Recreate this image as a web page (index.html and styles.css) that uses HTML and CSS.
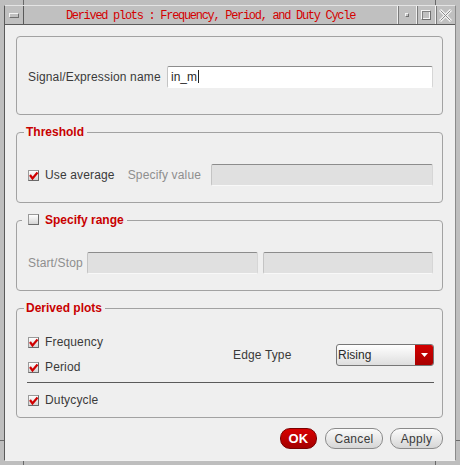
FILE: index.html
```html
<!DOCTYPE html>
<html>
<head>
<meta charset="utf-8">
<link rel="stylesheet" href="styles.css">
</head>
<body>
<span class="mark mark-tl"></span>
<span class="mark mark-tr"></span>
<span class="mark mark-bl"></span>
<span class="mark mark-br"></span>
<span class="mark mark-lb"></span>
<span class="mark mark-rb"></span>
<div class="window">
  <div class="titlebar">
    <div class="tb-menu"><span class="menu-icon"></span></div>
    <div class="tb-title">Derived plots : Frequency, Period, and Duty Cycle</div>
    <div class="tb-btn"><span class="iconify-icon"></span></div>
    <div class="tb-btn"><span class="max-icon"></span></div>
    <div class="tb-btn">
      <svg width="13" height="13" viewBox="0 0 13 13"><path d="M1 1 L12 12 M12 1 L1 12" stroke="#f4f4f4" stroke-width="3"/><path d="M1.5 1.5 L11.5 11.5 M11.5 1.5 L1.5 11.5" stroke="#8a8a8a" stroke-width="1"/></svg>
    </div>
  </div>
  <div class="content">
    <div class="group group-signal">
      <span class="label">Signal/Expression name</span>
      <div class="field field-signal">in_m<span class="caret"></span></div>
    </div>

    <div class="group group-threshold">
      <div class="legend legend-text">Threshold</div>
      <div class="row">
        <span class="check on"><svg width="11" height="11" viewBox="0 0 11 11"><path d="M2 5 L4.5 8.5 L9.5 2.5" fill="none" stroke="#d00000" stroke-width="2.2"/></svg></span>
        <span class="label">Use average</span>
        <span class="label dim spec">Specify value</span>
        <div class="field disabled field-spec"></div>
      </div>
    </div>

    <div class="group group-range">
      <div class="legend legend-check">
        <span class="check"></span>
        <span>Specify range</span>
      </div>
      <div class="row">
        <span class="label dim">Start/Stop</span>
        <div class="field disabled field-start"></div>
        <div class="field disabled field-stop"></div>
      </div>
    </div>

    <div class="group group-plots">
      <div class="legend legend-text">Derived plots</div>
      <div class="plots-top">
        <div class="checks">
          <div class="crow">
            <span class="check on"><svg width="11" height="11" viewBox="0 0 11 11"><path d="M2 5 L4.5 8.5 L9.5 2.5" fill="none" stroke="#d00000" stroke-width="2.2"/></svg></span>
            <span class="label">Frequency</span>
          </div>
          <div class="crow">
            <span class="check on"><svg width="11" height="11" viewBox="0 0 11 11"><path d="M2 5 L4.5 8.5 L9.5 2.5" fill="none" stroke="#d00000" stroke-width="2.2"/></svg></span>
            <span class="label">Period</span>
          </div>
        </div>
        <div class="edge">
          <span class="label">Edge Type</span>
          <div class="combo">
            <span class="combo-text">Rising</span>
            <span class="combo-arrow"><svg width="7" height="4" viewBox="0 0 7 4"><path d="M0 0 L7 0 L3.5 4 Z" fill="#ffffff"/></svg></span>
          </div>
        </div>
      </div>
      <div class="sep"></div>
      <div class="crow">
        <span class="check on"><svg width="11" height="11" viewBox="0 0 11 11"><path d="M2 5 L4.5 8.5 L9.5 2.5" fill="none" stroke="#d00000" stroke-width="2.2"/></svg></span>
        <span class="label">Dutycycle</span>
      </div>
    </div>

    <div class="buttons">
      <button class="btn btn-ok">OK</button>
      <button class="btn btn-cancel">Cancel</button>
      <button class="btn btn-apply">Apply</button>
    </div>
  </div>
</div>
</body>
</html>
```

FILE: styles.css
```css
html, body {
  margin: 0;
  padding: 0;
}
body {
  width: 460px;
  height: 465px;
  overflow: hidden;
  background: #bebebe;
  font-family: "Liberation Sans", Arial, sans-serif;
  font-size: 12px;
  color: #3a3a3a;
  position: relative;
}

/* frame corner markers */
.mark {
  position: absolute;
  background: #6a6a6a;
}
.mark-tl { left: 23px; top: 0; width: 1px; height: 5px; }
.mark-tr { left: 435px; top: 0; width: 1px; height: 5px; }
.mark-bl { left: 23px; top: 461px; width: 1px; height: 4px; }
.mark-br { left: 435px; top: 461px; width: 1px; height: 4px; }
.mark-lb { left: 0; top: 440px; width: 4px; height: 1px; }
.mark-rb { left: 456px; top: 440px; width: 4px; height: 1px; }

.window {
  box-sizing: border-box;
  margin: 5px 4px 4px 4px;
  height: 456px;
  border-left: 1px solid #5a5a5a;
  border-top: 1px solid #e4e4e4;
  border-right: 1px solid #8a8a8a;
  border-bottom: 1px solid #f2f2f2;
  display: flex;
  flex-direction: column;
}

/* title bar */
.titlebar {
  display: flex;
  height: 18px;
  border-bottom: 1px solid #5a5a5a;
  background: #c0c0c0;
}
.tb-menu {
  width: 18px;
  border-right: 1px solid #5a5a5a;
  display: flex;
  align-items: center;
  justify-content: center;
}
.menu-icon {
  width: 8px;
  height: 3px;
  border-top: 1px solid #f4f4f4;
  border-left: 1px solid #f4f4f4;
  border-right: 1px solid #707070;
  border-bottom: 1px solid #707070;
}
.tb-title {
  flex: 1;
  text-align: center;
  color: #d40000;
  font-family: "Liberation Mono", "DejaVu Sans Mono", monospace;
  font-size: 12px;
  letter-spacing: -1.3px;
  line-height: 18px;
  padding-top: 1px;
}
.tb-btn {
  width: 18px;
  border-left: 1px solid #f0f0f0;
  box-shadow: inset 1px 0 0 #7a7a7a;
  display: flex;
  align-items: center;
  justify-content: center;
}
.tb-btn:last-child {
  width: 19px;
}
.iconify-icon {
  width: 2px;
  height: 2px;
  border-top: 1px solid #f4f4f4;
  border-left: 1px solid #f4f4f4;
  border-right: 1px solid #707070;
  border-bottom: 1px solid #707070;
}
.max-icon {
  width: 8px;
  height: 8px;
  border-top: 1px solid #f4f4f4;
  border-left: 1px solid #f4f4f4;
  border-right: 1px solid #707070;
  border-bottom: 1px solid #707070;
  box-shadow: inset 1px 1px 0 #808080, inset -1px -1px 0 #f4f4f4;
}

/* content */
.content {
  flex: 1;
  background: #efefef;
  padding: 11px 12px 0 11px;
  display: flex;
  flex-direction: column;
}
.group {
  border: 1px solid #a2a2a2;
  border-radius: 4px;
  padding: 0 9px 0 11px;
}
.group-signal {
  display: flex;
  align-items: center;
  padding-top: 29px;
  padding-bottom: 26px;
}
.group-threshold,
.group-range,
.group-plots {
  margin-top: 17px;
  display: flex;
  flex-direction: column;
}
.group-threshold,
.group-range {
  padding-bottom: 16px;
}
.group-plots {
  padding-bottom: 9px;
}
.legend {
  align-self: flex-start;
  height: 15px;
  margin-top: -9px;
  background: #efefef;
  color: #c80000;
  font-weight: bold;
  font-size: 12px;
  display: flex;
  align-items: center;
  gap: 6px;
}
.legend-text {
  margin-left: -4px;
  padding: 0 3px 0 2px;
}
.legend-check {
  margin-left: -6px;
  padding: 0 3px 0 6px;
}

.label {
  letter-spacing: 0.15px;
  white-space: nowrap;
}
.dim {
  color: #8e8e8e;
}

.row {
  display: flex;
  align-items: center;
  height: 22px;
  margin-top: 25px;
}

.field {
  box-sizing: border-box;
  height: 22px;
  background: #ffffff;
  border-top: 1px solid #8c8c8c;
  border-left: 1px solid #c4c4c4;
  border-right: 1px solid #d6d6d6;
  border-bottom: 1px solid #ffffff;
  border-radius: 2px;
  font-size: 12px;
  color: #2a2a2a;
  line-height: 20px;
  padding-left: 3px;
}
.field.disabled {
  background: #e0e0e0;
  border-bottom-color: #f8f8f8;
}
.field-signal {
  width: 266px;
  margin-left: auto;
}
.caret {
  display: inline-block;
  width: 1px;
  height: 13px;
  background: #222;
  vertical-align: -2px;
  margin-left: 1px;
}
.field-spec {
  width: 222px;
  margin-left: auto;
}
.field-start {
  width: 171px;
  margin-left: auto;
}
.field-stop {
  width: 170px;
  margin-left: 5px;
}

.check {
  box-sizing: border-box;
  width: 11px;
  height: 11px;
  flex: none;
  border-top: 1px solid #9a9a9a;
  border-left: 1px solid #9a9a9a;
  border-right: 1px solid #6a6a6a;
  border-bottom: 1px solid #6a6a6a;
  background: linear-gradient(#ffffff, #d4d4d4);
  position: relative;
  margin-right: 6px;
}
.legend .check {
  margin-right: 0;
}
.check svg {
  position: absolute;
  left: -1px;
  top: -1px;
}
.spec {
  margin-left: 13px;
}

.plots-top {
  display: flex;
  margin-top: 19px;
}
.checks {
  width: 205px;
  display: flex;
  flex-direction: column;
  gap: 9px;
}
.crow {
  display: flex;
  align-items: center;
  height: 16px;
}
.edge {
  flex: 1;
  display: flex;
  align-items: center;
  margin-right: -1px;
}
.combo {
  box-sizing: border-box;
  margin-left: auto;
  width: 98px;
  height: 22px;
  border: 1px solid #777;
  border-radius: 3px;
  background: linear-gradient(#ffffff, #dedede);
  display: flex;
  align-items: center;
  overflow: hidden;
}
.combo-text {
  flex: 1;
  padding-left: 1px;
  color: #2a2a2a;
}
.combo-arrow {
  width: 18px;
  align-self: stretch;
  background: linear-gradient(#d20000, #a80000);
  display: flex;
  align-items: center;
  justify-content: center;
}
.sep {
  height: 1px;
  background: #5a5a5a;
  margin: 7px -1px 9px -1px;
}

.buttons {
  display: flex;
  justify-content: flex-end;
  margin-top: 10px;
}
.btn {
  box-sizing: border-box;
  height: 21px;
  border: 1px solid #8a8a8a;
  border-radius: 10px;
  background: linear-gradient(#fbfbfb, #d6d6d6);
  font-family: "Liberation Sans", Arial, sans-serif;
  font-size: 12px;
  letter-spacing: 0.3px;
  color: #3a3a3a;
  padding: 0;
}
.btn-ok {
  width: 37px;
  background: linear-gradient(#d80000, #a40000);
  border-color: #7a0000;
  color: #ffffff;
  font-weight: bold;
  font-size: 13px;
}
.btn-cancel {
  width: 58px;
  margin-left: 8px;
}
.btn-apply {
  width: 53px;
  margin-left: 7px;
}
```
